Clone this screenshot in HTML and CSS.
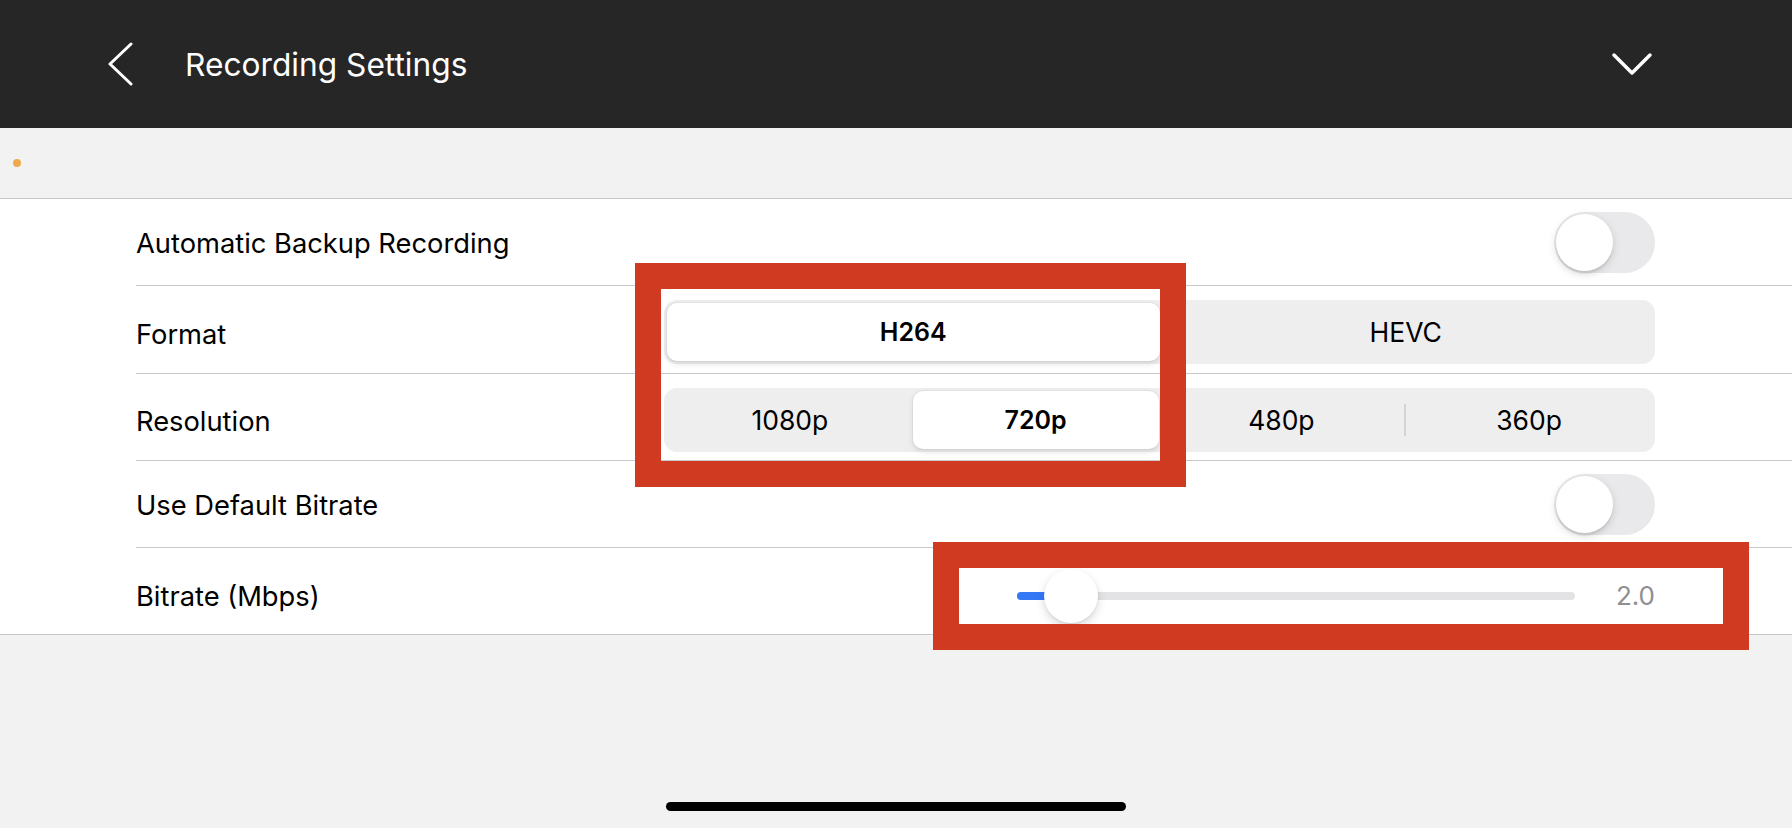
FILE: index.html
```html
<!DOCTYPE html>
<html lang="en">
<head>
    <meta charset="UTF-8">
    <meta name="viewport" content="width=device-width, initial-scale=1.0">
    <title>Recording Settings</title>
    <link rel="stylesheet" href="styles.css">
</head>
<body>
    <div class="page">
        <!-- Top bar -->
        <div class="top-bar">
            <div class="top-left">
                <svg class="back-icon" width="30" height="44" viewBox="0 0 30 44">
                    <path d="M26 2 L5 22 L26 42" fill="none" stroke="#fff" stroke-width="3" stroke-linecap="round" stroke-linejoin="round"/>
                </svg>
                <div class="title">Recording Settings</div>
            </div>
            <svg class="collapse-icon" width="42" height="26" viewBox="0 0 42 26">
                <path d="M3 4 L21 22 L39 4" fill="none" stroke="#fff" stroke-width="3.5" stroke-linecap="round" stroke-linejoin="round"/>
            </svg>
        </div>

        <!-- Status strip -->
        <div class="status-strip">
            <span class="status-dot"></span>
        </div>

        <!-- Settings list -->
        <div class="settings">
            <div class="row">
                <div class="label">Automatic Backup Recording</div>
                <div class="toggle"><span class="knob"></span></div>
            </div>
            <div class="row row-low">
                <div class="label">Format</div>
                <div class="segmented">
                    <div class="segment selected">H264</div>
                    <div class="segment">HEVC</div>
                </div>
            </div>
            <div class="row row-low">
                <div class="label">Resolution</div>
                <div class="segmented">
                    <div class="segment">1080p</div>
                    <div class="segment selected">720p</div>
                    <div class="segment">480p</div>
                    <span class="divider"></span>
                    <div class="segment">360p</div>
                </div>
            </div>
            <div class="row">
                <div class="label">Use Default Bitrate</div>
                <div class="toggle"><span class="knob"></span></div>
            </div>
            <div class="row row-low">
                <div class="label">Bitrate (Mbps)</div>
                <div class="slider">
                    <div class="track">
                        <div class="fill"></div>
                        <span class="thumb"></span>
                    </div>
                    <div class="value">2.0</div>
                </div>
            </div>
        </div>

        <div class="bottom-area">
            <span class="home-indicator"></span>
        </div>
    </div>

    <!-- Annotation boxes -->
    <div class="mark mark-format"></div>
    <div class="mark mark-bitrate"></div>
</body>
</html>
```

FILE: styles.css
```css
body {
    margin: 0;
    background-color: #f2f2f2;
    font-family: Inter, "Noto Sans", sans-serif;
    color: #000;
}
.page {
    display: flex;
    flex-direction: column;
    height: 100vh;
}
.top-bar {
    height: 128px;
    background-color: #262626;
    display: flex;
    align-items: center;
    justify-content: space-between;
    padding: 0 139px 0 105px;
    flex-shrink: 0;
}
.top-left {
    display: flex;
    align-items: center;
    gap: 50px;
}
.title {
    color: #fff;
    font-size: 31.7px;
}
.status-strip {
    height: 70px;
    display: flex;
    align-items: center;
    padding-left: 13px;
    flex-shrink: 0;
}
.status-dot {
    width: 8px;
    height: 8px;
    border-radius: 50%;
    background-color: #f0a94a;
}
.settings {
    background-color: #fff;
    border-top: 1px solid #c8c7cc;
    border-bottom: 1px solid #c8c7cc;
    padding-left: 136px;
    flex-shrink: 0;
}
.row {
    height: 86.3px;
    display: flex;
    align-items: center;
    justify-content: space-between;
    padding-right: 137px;
    border-bottom: 1px solid #c8c7cc;
}
.row:last-child {
    border-bottom: none;
}
.label {
    font-size: 27.3px;
    padding-top: 3px;
}
.row-low .label {
    padding-top: 10px;
}
/* Switch */
.toggle {
    width: 101px;
    height: 61px;
    border-radius: 31px;
    background-color: #e9e9eb;
    position: relative;
    box-sizing: border-box;
    padding: 2px;
}
.knob {
    display: block;
    width: 57px;
    height: 57px;
    border-radius: 50%;
    background-color: #fff;
    box-shadow: 0 3px 8px rgba(0, 0, 0, 0.15), 0 3px 1px rgba(0, 0, 0, 0.06);
}
/* Segmented control */
.segmented {
    width: 991px;
    height: 64px;
    box-sizing: border-box;
    padding: 3px;
    border-radius: 13px;
    background-color: #eeeeef;
    display: flex;
    align-items: stretch;
    margin-top: 6px;
}
.segment {
    flex: 1;
    display: flex;
    align-items: center;
    justify-content: center;
    font-size: 26.5px;
    border-radius: 10px;
}
.segment.selected {
    background-color: #fff;
    font-size: 25px;
    font-weight: 600;
    box-shadow: 0 3px 6px rgba(0, 0, 0, 0.10), 0 0 0 1px rgba(0, 0, 0, 0.04);
}
.divider {
    width: 2px;
    align-self: center;
    height: 32px;
    background-color: #d4d4d8;
}
/* Slider */
.slider {
    display: flex;
    align-items: center;
    margin-top: 9px;
}
.track {
    width: 558px;
    height: 8px;
    border-radius: 4px;
    background-color: #e3e3e6;
    position: relative;
}
.fill {
    width: 54px;
    height: 100%;
    border-radius: 4px;
    background-color: #3478f6;
}
.thumb {
    position: absolute;
    left: 27px;
    top: -23px;
    width: 54px;
    height: 54px;
    border-radius: 50%;
    background-color: #fff;
    box-shadow: 0 4px 10px rgba(0, 0, 0, 0.15), 0 1px 2px rgba(0, 0, 0, 0.08);
}
.value {
    width: 40px;
    margin-left: 40px;
    text-align: right;
    color: #8e8e93;
    font-size: 26px;
}
.bottom-area {
    flex: 1;
    display: flex;
    align-items: flex-end;
    justify-content: center;
    padding-bottom: 17px;
}
.home-indicator {
    width: 460px;
    height: 9px;
    border-radius: 5px;
    background-color: #000;
}
/* Red annotation frames */
.mark {
    position: absolute;
    border: 26px solid #cf3a21;
    box-sizing: border-box;
}
.mark-format {
    left: 635px;
    top: 263px;
    width: 551px;
    height: 224px;
}
.mark-bitrate {
    left: 933px;
    top: 542px;
    width: 816px;
    height: 108px;
}
```
